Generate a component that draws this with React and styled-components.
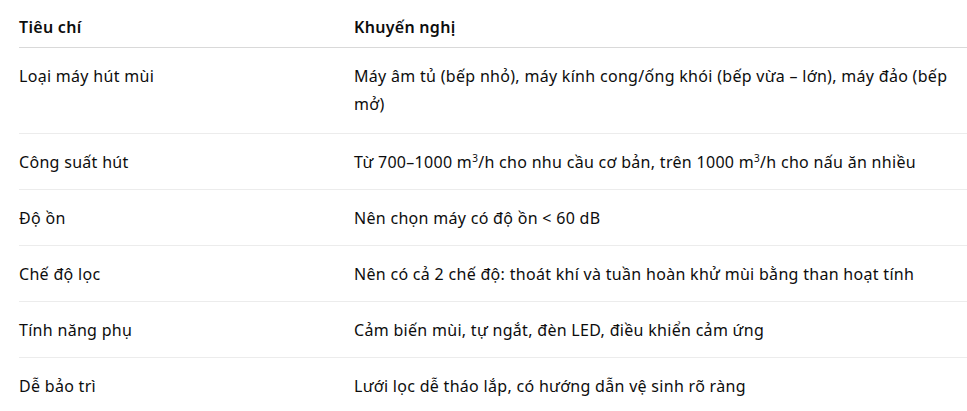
import styled, { createGlobalStyle } from "styled-components";

const GlobalStyle = createGlobalStyle`
body {
    margin: 0;
    background: #ffffff;
    font-family: "Noto Sans", "Open Sans", sans-serif;
    color: #0d0d0d;
}
`
const Wrapper = styled.div`
padding: 0 0 0 19px;
overflow: hidden;
`
const Table = styled.table`
width: 948px;
table-layout: fixed;
border-collapse: collapse;
font-size: 16px;
line-height: 28px;
letter-spacing: 0.3px;
`
const HeadCell = styled.th`
text-align: left;
font-weight: 600;
padding: 13px 16px 6px 0;
border-bottom: 1px solid #d9d9d9;
width: ${props => props.$width || 'auto'};
`
const Row = styled.tr`
border-bottom: 1px solid ${props => props.$last ? 'transparent' : '#ececec'};
`
const Cell = styled.td`
vertical-align: top;
padding: 14px 0 ${props => props.$tall ? '15px' : '13px'} 0;
`
const Sup = styled.sup`
font-size: 10px;
line-height: 0;
`

const rows = [
    { key: "Loại máy hút mùi", value: "Máy âm tủ (bếp nhỏ), máy kính cong/ống khói (bếp vừa – lớn), máy đảo (bếp mở)", tall: true },
    { key: "Công suất hút", value: <>Từ 700–1000 m<Sup>3</Sup>/h cho nhu cầu cơ bản, trên 1000 m<Sup>3</Sup>/h cho nấu ăn nhiều</> },
    { key: "Độ ồn", value: "Nên chọn máy có độ ồn < 60 dB" },
    { key: "Chế độ lọc", value: "Nên có cả 2 chế độ: thoát khí và tuần hoàn khử mùi bằng than hoạt tính" },
    { key: "Tính năng phụ", value: "Cảm biến mùi, tự ngắt, đèn LED, điều khiển cảm ứng" },
    { key: "Dễ bảo trì", value: "Lưới lọc dễ tháo lắp, có hướng dẫn vệ sinh rõ ràng" },
]

const App = () => {
    return (
        <>
            <GlobalStyle />
            <Wrapper>
                <Table>
                    <thead>
                        <tr>
                            <HeadCell $width="319px">Tiêu chí</HeadCell>
                            <HeadCell>Khuyến nghị</HeadCell>
                        </tr>
                    </thead>
                    <tbody>
                        {rows.map((item, idx) => (
                            <Row key={idx} $last={idx === rows.length - 1}>
                                <Cell $tall={item.tall}>{item.key}</Cell>
                                <Cell $tall={item.tall}>{item.value}</Cell>
                            </Row>
                        ))}
                    </tbody>
                </Table>
            </Wrapper>
        </>
    )
}
export default App;
